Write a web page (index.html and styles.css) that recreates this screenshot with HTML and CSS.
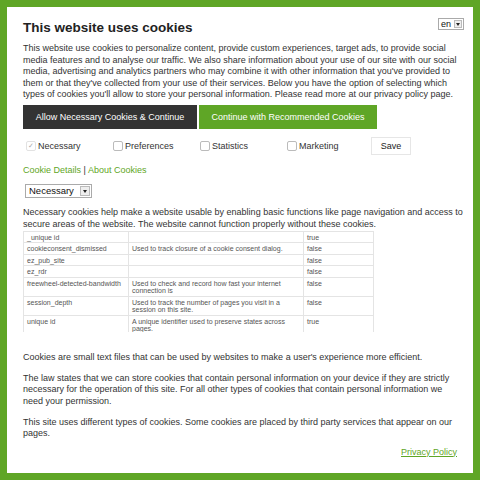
FILE: index.html
```
<!DOCTYPE html>
<html lang="en">
<head>
	<meta charset="UTF-8">
	<meta name="viewport" content="width=device-width, initial-scale=1.0">
	<title>Cookies</title>
	<link rel="stylesheet" href="styles.css">
</head>
<body>
	<div class="panel">
		<div class="header">
			<h1 class="title">This website uses cookies</h1>
			<div class="lang-select">en<span class="arrow"></span></div>
		</div>
		<p class="intro">This website use cookies to personalize content, provide custom experiences, target ads, to provide social media features and to analyse our traffic. We also share information about your use of our site with our social media, advertising and analytics partners who may combine it with other information that you've provided to them or that they've collected from your use of their services. Below you have the option of selecting which types of cookies you'll allow to store your personal information. Please read more at our privacy policy page.</p>
		<div class="actions">
			<button class="btn btn-dark">Allow Necessary Cookies &amp; Continue</button>
			<button class="btn btn-green">Continue with Recommended Cookies</button>
		</div>
		<div class="choices">
			<label class="choice"><span class="box checked">&#10003;</span>Necessary</label>
			<label class="choice"><span class="box"></span>Preferences</label>
			<label class="choice"><span class="box"></span>Statistics</label>
			<label class="choice"><span class="box"></span>Marketing</label>
			<button class="save-btn">Save</button>
		</div>
		<div class="links">
			<a href="#">Cookie Details</a> | <a href="#">About Cookies</a>
		</div>
		<div class="type-select">Necessary<span class="arrow"></span></div>
		<p class="desc">Necessary cookies help make a website usable by enabling basic functions like page navigation and access to secure areas of the website. The website cannot function properly without these cookies.</p>
		<div class="table-wrap">
			<table class="cookie-table">
				<tr><td class="c-name">_unique id</td><td class="c-desc"></td><td class="c-flag">true</td></tr>
				<tr><td class="c-name">cookieconsent_dismissed</td><td class="c-desc">Used to track closure of a cookie consent dialog.</td><td class="c-flag">false</td></tr>
				<tr><td class="c-name">ez_pub_site</td><td class="c-desc"></td><td class="c-flag">false</td></tr>
				<tr><td class="c-name">ez_rdr</td><td class="c-desc"></td><td class="c-flag">false</td></tr>
				<tr><td class="c-name">freewheel-detected-bandwidth</td><td class="c-desc">Used to check and record how fast your internet connection is</td><td class="c-flag">false</td></tr>
				<tr><td class="c-name">session_depth</td><td class="c-desc">Used to track the number of pages you visit in a session on this site.</td><td class="c-flag">false</td></tr>
				<tr><td class="c-name">unique id</td><td class="c-desc">A unique identifier used to preserve states across pages.</td><td class="c-flag">true</td></tr>
			</table>
		</div>
		<p class="info first">Cookies are small text files that can be used by websites to make a user's experience more efficient.</p>
		<p class="info">The law states that we can store cookies that contain personal information on your device if they are strictly necessary for the operation of this site. For all other types of cookies that contain personal information we need your permission.</p>
		<p class="info">This site uses different types of cookies. Some cookies are placed by third party services that appear on our pages.</p>
		<div class="policy"><a href="#">Privacy Policy</a></div>
	</div>
</body>
</html>
```

FILE: styles.css
```
body {
	margin: 0;
	background-color: #5fa626;
	font-family: "Liberation Sans", Arial, sans-serif;
	color: #333;
	font-size: 9px;
}

.panel {
	margin: 7px;
	height: 466px;
	box-sizing: border-box;
	background-color: #fff;
	padding: 11px 9px 0 16px;
	overflow: hidden;
}

.header {
	display: flex;
	justify-content: space-between;
	align-items: flex-start;
}

.title {
	font-size: 13.5px;
	line-height: 16px;
	font-weight: bold;
	color: #222;
	margin: 2px 0 0 0;
}

.lang-select {
	width: 22px;
	height: 10px;
	border: 1px solid #aaa;
	font-size: 9px;
	line-height: 10px;
	padding-left: 2px;
	display: flex;
	justify-content: space-between;
	align-items: center;
	color: #111;
}

.arrow {
	width: 8px;
	height: 8px;
	background: #eee;
	border: 1px solid #bbb;
	position: relative;
	box-sizing: border-box;
	margin-right: 1px;
}

.arrow::after {
	content: "";
	position: absolute;
	left: 1px;
	top: 2px;
	border-left: 2px solid transparent;
	border-right: 2px solid transparent;
	border-top: 3px solid #222;
}

.intro {
	margin: 7px 4px 0 0;
	line-height: 11.5px;
}

.actions {
	display: flex;
	gap: 2px;
	margin-top: 4px;
}

.btn {
	font-family: inherit;
	font-size: 9px;
	color: #fff;
	border: none;
	height: 24px;
	padding: 0;
	cursor: pointer;
}

.btn-dark {
	background-color: #333;
	width: 174px;
}

.btn-green {
	background-color: #5fa626;
	width: 178px;
}

.choices {
	display: flex;
	align-items: center;
	margin-top: 8px;
	height: 18px;
}

.choice {
	width: 87px;
	display: flex;
	align-items: center;
	gap: 2px;
	color: #333;
	font-size: 9px;
}

.box {
	width: 8px;
	height: 8px;
	border: 1px solid #bbb;
	border-radius: 2px;
	margin-left: 3px;
	font-size: 7px;
	line-height: 8px;
	text-align: center;
	color: #aaa;
}

.box.checked {
	border-color: #e2e2e2;
}

.save-btn {
	width: 40px;
	height: 18px;
	background: #fff;
	border: 1px solid #e6e6e6;
	font-family: inherit;
	font-size: 9px;
	color: #222;
	padding: 0;
}

.links {
	margin-top: 9px;
	line-height: 12px;
	font-size: 9px;
	color: #333;
}

.links a,
.policy a {
	color: #5fa626;
	text-decoration: none;
}

.type-select {
	margin: 8px 0 0 2px;
	width: 62px;
	height: 12px;
	border: 1px solid #aaa;
	display: flex;
	justify-content: space-between;
	align-items: center;
	padding-left: 3px;
	color: #111;
	font-size: 9.5px;
}

.type-select .arrow {
	height: 10px;
	width: 10px;
}

.type-select .arrow::after {
	left: 2px;
	top: 3px;
}

.desc {
	margin: 8px 0 0 0;
	line-height: 12px;
}

.table-wrap {
	width: 351px;
	height: 101px;
	overflow: hidden;
	margin-top: 1px;
}

.cookie-table {
	width: 351px;
	border-collapse: collapse;
	font-size: 7px;
	color: #555;
	table-layout: fixed;
}

.cookie-table td {
	border: 1px solid #e4e4e4;
	padding: 2px 3px 1px;
	vertical-align: top;
	line-height: 7.5px;
	height: 7.5px;
}

.c-name {
	width: 98px;
}

.c-desc {
	width: 168px;
}

.info {
	margin: 9.5px 0 0 0;
	line-height: 11.5px;
}

.info.first {
	margin-top: 20px;
}

.policy {
	margin-top: 6px;
	line-height: 12px;
	text-align: right;
	padding-right: 7px;
}

.policy a {
	text-decoration: underline;
}
```
